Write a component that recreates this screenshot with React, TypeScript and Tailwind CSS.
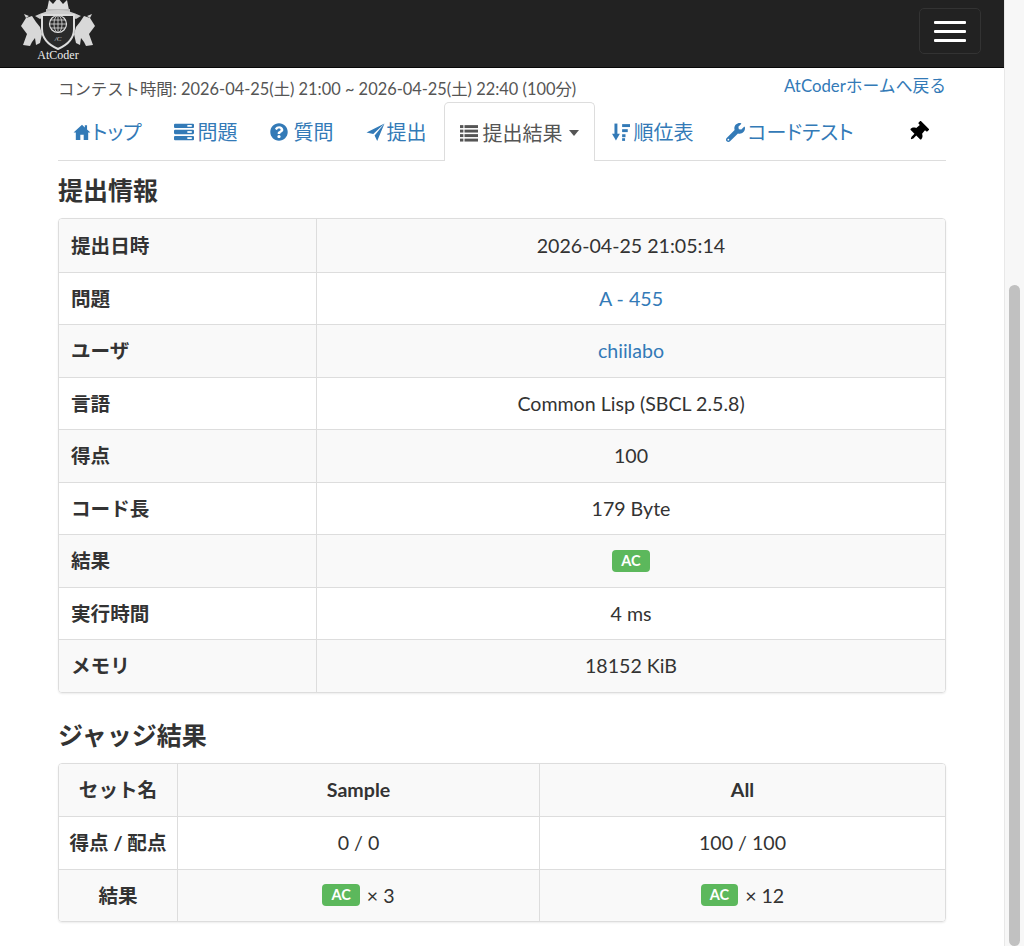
import React from "react";
import { FaQuestionCircle, FaWrench, FaThumbtack } from "react-icons/fa";

const font = "font-['Lato','Noto_Sans_CJK_JP',sans-serif]";

function Logo() {
  return (
    <svg width="78" height="64" viewBox="0 0 78 64" className="block">
      {/* crown */}
      <path d="M28 11 L30 1 L34 5 L39 -1 L44 5 L48 1 L50 11 Z" fill="#ddd" />
      <rect x="27" y="10" width="24" height="3" fill="#bbb" />
      {/* mantle */}
      <path d="M16 17 Q39 5 62 17 L57 20 Q39 10 21 20 Z" fill="#ccc" />
      {/* shield */}
      <path d="M23 16 L55 16 L55 30 Q55 43 39 50 Q23 43 23 30 Z" fill="#2a2a2a" stroke="#ddd" strokeWidth="2" />
      {/* globe */}
      <circle cx="39" cy="25" r="8.5" fill="none" stroke="#ddd" strokeWidth="1.2" />
      <ellipse cx="39" cy="25" rx="4" ry="8.5" fill="none" stroke="#ddd" strokeWidth="0.8" />
      <line x1="30.5" y1="25" x2="47.5" y2="25" stroke="#ddd" strokeWidth="0.8" />
      <line x1="31.5" y1="21" x2="46.5" y2="21" stroke="#ddd" strokeWidth="0.8" />
      <line x1="31.5" y1="29" x2="46.5" y2="29" stroke="#ddd" strokeWidth="0.8" />
      <line x1="39" y1="16.5" x2="39" y2="33.5" stroke="#ddd" strokeWidth="0.8" />
      <text x="39" y="42" textAnchor="middle" fontSize="7" fill="#ddd" fontFamily="Liberation Serif, serif" fontStyle="italic">/C</text>
      {/* left horse */}
      <path d="M4 46 L8 35 L5 31 L2 27 L7 19 L13 17 L17 23 L21 28 L23 35 L21 44 L17 46 L16 39 L13 43 L11 47 Z" fill="#d8d8d8" />
      <path d="M7 19 L5 15 L10 17 Z" fill="#d8d8d8" />
      {/* right horse */}
      <path d="M74 46 L70 35 L73 31 L76 27 L71 19 L65 17 L61 23 L57 28 L55 35 L57 44 L61 46 L62 39 L65 43 L67 47 Z" fill="#d8d8d8" />
      <path d="M71 19 L73 15 L68 17 Z" fill="#d8d8d8" />
      <text x="39" y="60" textAnchor="middle" fontSize="12" fill="#eee" fontFamily="Liberation Serif, serif">AtCoder</text>
    </svg>
  );
}

function HomeIcon() {
  return (
    <svg width="18" height="18" viewBox="0 0 16 16" fill="currentColor">
      <path d="M8 1.5 L0.5 8.5 L2.5 8.5 L2.5 15 L6.5 15 L6.5 10.5 L9.5 10.5 L9.5 15 L13.5 15 L13.5 8.5 L15.5 8.5 L12.5 5.7 L12.5 2 L10.5 2 L10.5 3.9 Z" />
    </svg>
  );
}

function TasksIcon() {
  return (
    <svg width="20" height="18" viewBox="0 0 18 16">
      <rect x="0" y="0.5" width="18" height="4" rx="1" fill="currentColor" />
      <rect x="0" y="6" width="18" height="4" rx="1" fill="currentColor" />
      <rect x="0" y="11.5" width="18" height="4" rx="1" fill="currentColor" />
      <rect x="12" y="1.7" width="4" height="1.6" fill="#fff" />
      <rect x="12" y="7.2" width="4" height="1.6" fill="#fff" />
      <rect x="12" y="12.7" width="4" height="1.6" fill="#fff" />
    </svg>
  );
}

function SendIcon() {
  return (
    <svg width="19" height="18" viewBox="0 0 16 16" fill="currentColor">
      <path d="M16 0.5 L0 8.5 L6 9.8 L16 0.5 L7.2 11 L9.5 16 Z" />
    </svg>
  );
}

function ListIcon() {
  return (
    <svg width="18" height="18" viewBox="0 0 16 16" fill="currentColor">
      <rect x="0" y="1" width="3" height="2.6" />
      <rect x="4" y="1" width="12" height="2.6" />
      <rect x="0" y="5" width="3" height="2.6" />
      <rect x="4" y="5" width="12" height="2.6" />
      <rect x="0" y="9" width="3" height="2.6" />
      <rect x="4" y="9" width="12" height="2.6" />
      <rect x="0" y="13" width="3" height="2.6" />
      <rect x="4" y="13" width="12" height="2.6" />
    </svg>
  );
}

function SortIcon() {
  return (
    <svg width="18" height="18" viewBox="0 0 16 16" fill="currentColor">
      <rect x="2.2" y="0.5" width="2.6" height="10" />
      <path d="M0 9.5 L7 9.5 L3.5 15.5 Z" />
      <rect x="9" y="1" width="7" height="2.6" />
      <rect x="9" y="5.5" width="5" height="2.6" />
      <rect x="9" y="10" width="3" height="2.6" />
      <rect x="9" y="13.5" width="2.6" height="2.4" />
    </svg>
  );
}

function Tab({ icon, label, active, caret, gap = "gap-[3px]" }: { icon: React.ReactNode; label: string; active?: boolean; caret?: boolean; gap?: string }) {
  return (
    <div
      className={
        "mr-[2px] flex h-[58px] items-center px-[15px] pt-[2px] text-[20px] [font-feature-settings:'palt'] " +
        gap +
        " " +
        (active
          ? "-mb-px h-[59px] rounded-t-[5px] border border-b-0 border-[#ddd] bg-white text-[#555]"
          : "text-[#337ab7]")
      }
    >
      <span className="flex items-center">{icon}</span>
      <span className="leading-none">{label}</span>
      {caret && (
        <span className="ml-[1px] inline-block h-0 w-0 border-x-[5px] border-t-[6px] border-x-transparent border-t-[#555]" />
      )}
    </div>
  );
}

function Badge() {
  return (
    <span className="inline-flex h-[22px] items-center rounded-[4px] bg-[#5cb85c] px-[9px] text-[14.5px] font-bold leading-none text-white">
      AC
    </span>
  );
}

const infoRows: { label: string; value: React.ReactNode }[] = [
  { label: "提出日時", value: "2026-04-25 21:05:14" },
  { label: "問題", value: <span className="text-[#337ab7]">A - 455</span> },
  { label: "ユーザ", value: <span className="text-[#337ab7]">chiilabo</span> },
  { label: "言語", value: "Common Lisp (SBCL 2.5.8)" },
  { label: "得点", value: "100" },
  { label: "コード長", value: "179 Byte" },
  { label: "結果", value: <Badge /> },
  { label: "実行時間", value: "4 ms" },
  { label: "メモリ", value: "18152 KiB" },
];

export default function App() {
  return (
    <div className={"flex h-[946px] w-[1024px] overflow-hidden bg-white text-[#333] " + font}>
      <div className="flex w-[1004px] flex-col">
        {/* navbar */}
        <div className="flex h-[68px] shrink-0 items-start justify-between border-b border-[#080808] bg-[#222] pl-[19px] pr-[23px]">
          <div className="-mt-[1px]">
            <Logo />
          </div>
          <div className="mt-[8px] flex h-[46px] w-[62px] flex-col items-center justify-center gap-[6px] rounded-[5px] border border-[#333] bg-[#222]">
            <span className="block h-[3px] w-[32px] rounded-[1px] bg-white" />
            <span className="block h-[3px] w-[32px] rounded-[1px] bg-white" />
            <span className="block h-[3px] w-[32px] rounded-[1px] bg-white" />
          </div>
        </div>

        <div className="mx-auto w-[888px]">
          {/* contest time */}
          <div className="flex h-[35px] items-start justify-between">
            <div className="pt-[11px] text-[16.4px] leading-[20px] text-[#555]">
              コンテスト時間: 2026-04-25(土) 21:00 ~ 2026-04-25(土) 22:40 (100分)
            </div>
            <div className="pt-[8px] text-[16.8px] leading-[20px] text-[#337ab7]">AtCoderホームへ戻る</div>
          </div>

          {/* tabs */}
          <div className="flex h-[58px] items-end border-b border-[#ddd]">
            <Tab icon={<HomeIcon />} label="トップ" gap="gap-[1px]" />
            <Tab icon={<TasksIcon />} label="問題" gap="gap-[4px]" />
            <Tab icon={<FaQuestionCircle size={18} />} label="質問" gap="gap-[6px]" />
            <Tab icon={<SendIcon />} label="提出" gap="gap-[2px]" />
            <Tab icon={<ListIcon />} label="提出結果" active caret gap="gap-[5px]" />
            <Tab icon={<SortIcon />} label="順位表" gap="gap-[4px]" />
            <Tab icon={<FaWrench size={19} />} label="コードテスト" gap="gap-[3px]" />
            <div className="ml-auto flex h-[58px] items-center pr-[18px] pt-[2px] text-black">
              <FaThumbtack size={20} className="rotate-45" />
            </div>
          </div>

          {/* submission info */}
          <h3 className="mt-[15px] mb-[14px] text-[25px] font-bold leading-[28px] text-[#333]">提出情報</h3>
          <div className="overflow-hidden rounded-[4px] border border-[#ddd] shadow-[0_1px_2px_rgba(0,0,0,0.08)]">
            {infoRows.map((r, i) => (
              <div
                key={r.label}
                className={
                  "flex h-[52.5px] text-[19.6px] " +
                  (i > 0 ? "border-t border-[#ddd] " : "") +
                  (i % 2 === 0 ? "bg-[#f9f9f9]" : "bg-white")
                }
              >
                <div className="flex w-[258px] shrink-0 items-center border-r border-[#ddd] pl-[12px] font-bold">
                  {r.label}
                </div>
                <div className="flex flex-1 items-center justify-center">{r.value}</div>
              </div>
            ))}
          </div>

          {/* judge result */}
          <h3 className="mt-[28px] mb-[14px] text-[25px] font-bold leading-[28px] text-[#333]">ジャッジ結果</h3>
          <div className="overflow-hidden rounded-[4px] border border-[#ddd] text-[19.6px] shadow-[0_1px_2px_rgba(0,0,0,0.08)]">
            <div className="grid h-[52.5px] grid-cols-[119px_362px_1fr] bg-[#f9f9f9] font-bold">
              <div className="flex items-center justify-center border-r border-[#ddd]">セット名</div>
              <div className="flex items-center justify-center border-r border-[#ddd]">Sample</div>
              <div className="flex items-center justify-center">All</div>
            </div>
            <div className="grid h-[52.5px] grid-cols-[119px_362px_1fr] border-t border-[#ddd] bg-white">
              <div className="flex items-center justify-center border-r border-[#ddd] font-bold">得点 / 配点</div>
              <div className="flex items-center justify-center border-r border-[#ddd]">0 / 0</div>
              <div className="flex items-center justify-center">100 / 100</div>
            </div>
            <div className="grid h-[52.5px] grid-cols-[119px_362px_1fr] border-t border-[#ddd] bg-[#f9f9f9]">
              <div className="flex items-center justify-center border-r border-[#ddd] font-bold">結果</div>
              <div className="flex items-center justify-center gap-[7px] border-r border-[#ddd]">
                <Badge />
                <span>× 3</span>
              </div>
              <div className="flex items-center justify-center gap-[7px]">
                <Badge />
                <span>× 12</span>
              </div>
            </div>
          </div>
        </div>
      </div>

      {/* scrollbar */}
      <div className="flex w-[20px] flex-col items-center border-l border-[#e8e8e8] bg-[#f7f7f7] pt-[285px]">
        <div className="h-[700px] w-[11px] rounded-full bg-[#c1c1c1]" />
      </div>
    </div>
  );
}
